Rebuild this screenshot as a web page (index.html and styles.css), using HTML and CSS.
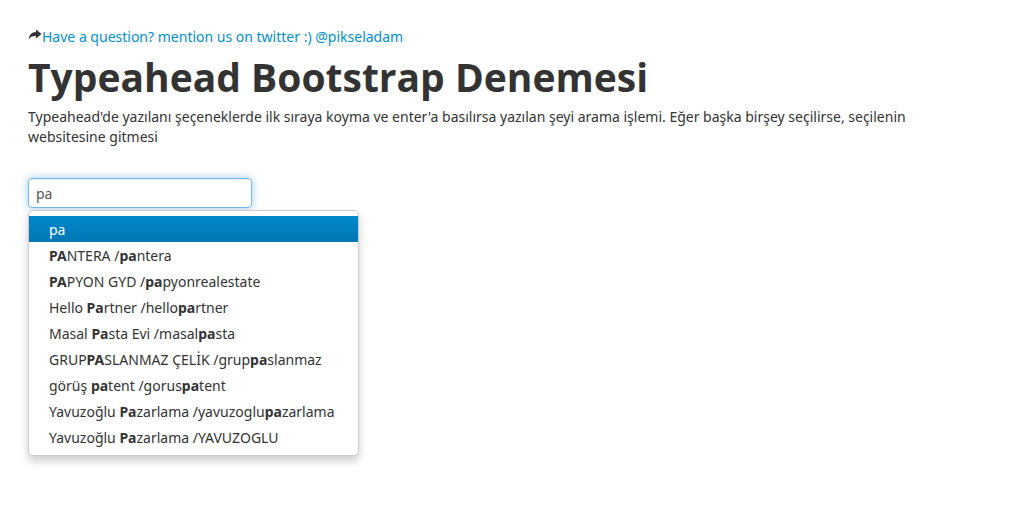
FILE: index.html
```
<!DOCTYPE html>
<html lang="tr">
<head>
<meta charset="utf-8">
<title>Typeahead Bootstrap Denemesi</title>
<link rel="stylesheet" href="styles.css">
</head>
<body>
<main class="container">
  <div class="contact"><svg class="icon" viewBox="0 0 14 14" aria-hidden="true"><path d="M8 1.500l5.500 4.500L8 10.500V8C4.500 7.800 2.300 8.600 1 11.500C.8 7 3.500 4.200 8 4z"/></svg><a class="link" href="#">Have a question? mention us on twitter :) @pikseladam</a></div>
  <h1 class="title">Typeahead Bootstrap Denemesi</h1>
  <p class="lead">Typeahead'de yazılanı şeçeneklerde ilk sıraya koyma ve enter'a basılırsa yazılan şeyi arama işlemi. Eğer başka birşey seçilirse, seçilenin websitesine gitmesi</p>
  <div class="typeahead">
    <input class="search" type="text" value="pa" aria-label="Arama" autocomplete="off">
    <ul class="menu">
      <li><a class="item active" href="#">pa</a></li>
      <li><a class="item" href="#"><strong>PA</strong>NTERA /<strong>pa</strong>ntera</a></li>
      <li><a class="item" href="#"><strong>PA</strong>PYON GYD /<strong>pa</strong>pyonrealestate</a></li>
      <li><a class="item" href="#">Hello <strong>Pa</strong>rtner /hello<strong>pa</strong>rtner</a></li>
      <li><a class="item" href="#">Masal <strong>Pa</strong>sta Evi /masal<strong>pa</strong>sta</a></li>
      <li><a class="item" href="#">GRUP<strong>PA</strong>SLANMAZ ÇELİK /grup<strong>pa</strong>slanmaz</a></li>
      <li><a class="item" href="#">görüş <strong>pa</strong>tent /gorus<strong>pa</strong>tent</a></li>
      <li><a class="item" href="#">Yavuzoğlu <strong>Pa</strong>zarlama /yavuzoglu<strong>pa</strong>zarlama</a></li>
      <li><a class="item" href="#">Yavuzoğlu <strong>Pa</strong>zarlama /YAVUZOGLU</a></li>
    </ul>
  </div>
</main>
</body>
</html>
```
FILE: styles.css
```
body {
  min-height: 100vh;
  margin: 0;
  background: #fff;
  color: #333;
  font: 14px/20px "Noto Sans", "Open Sans", sans-serif;
}
.container {
  padding: 27px 80px 40px 28px;
}
.contact {
  display: flex;
  align-items: center;
}
.icon {
  width: 14px;
  height: 14px;
  margin-bottom: 4px;
  fill: #333;
}
.link {
  color: #0090d4;
  text-decoration: none;
}
.title {
  margin: 10px 0;
  font-family: "Open Sans", sans-serif;
  font-size: 39px;
  line-height: 40px;
}
.lead {
  margin: 0 0 31px;
}
.typeahead {
  position: relative;
}
.search {
  display: block;
  box-sizing: border-box;
  width: 224px;
  height: 30px;
  padding: 4px 7px;
  border: 1px solid #75b9f0;
  border-radius: 4px;
  outline: 0;
  box-shadow: inset 0 1px 1px rgba(0, 0, 0, .08), 0 0 8px rgba(82, 168, 236, .6);
  color: #555;
  font: inherit;
}
.menu {
  position: absolute;
  top: 100%;
  left: 0;
  min-width: 329px;
  margin: 2px 0 0;
  padding: 5px 0;
  list-style: none;
  background: #fff;
  border: 1px solid #ccc;
  border-radius: 5px;
  box-shadow: 0 5px 10px rgba(0, 0, 0, .2);
}
.item {
  display: block;
  padding: 4px 20px 2px;
  color: #333;
  text-decoration: none;
  white-space: nowrap;
}
.active {
  color: #fff;
  background: linear-gradient(#08c, #0077b3);
}
```
